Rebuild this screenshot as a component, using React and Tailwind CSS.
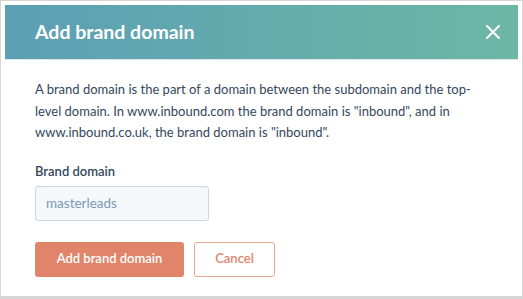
export default function App() {
  return (
    <div
      className="w-[523px] h-[299px] bg-white border border-[#d6d6d6] border-b-[3px] p-1 flex flex-col"
      style={{ fontFamily: "Lato, 'Open Sans', sans-serif" }}
    >
      <div className="h-[55px] shrink-0 flex items-center justify-between pl-[30px] pr-[18px] bg-gradient-to-r from-[#5c9fb4] to-[#6cb7a4] border-b border-[#d9e9ee]">
        <h1 className="text-[19.5px] font-bold text-white">Add brand domain</h1>
        <svg width="14" height="14" viewBox="0 0 14 14" className="text-white">
          <path d="M1 1 L13 13 M13 1 L1 13" stroke="currentColor" strokeWidth="2" strokeLinecap="square" />
        </svg>
      </div>
      <div className="pl-[30px] pr-[30px] pt-[19px] text-[#33475b]">
        <p className="text-[13px] leading-[21.5px] whitespace-nowrap">
          A brand domain is the part of a domain between the subdomain and the top-
          <br />
          level domain. In www.inbound.com the brand domain is "inbound", and in
          <br />
          www.inbound.co.uk, the brand domain is "inbound".
        </p>
        <div className="mt-[17px] text-[13px] font-semibold leading-[20px]">Brand domain</div>
        <div className="mt-[5px] w-[174px] h-[35px] rounded-[3px] border border-[#cbd6e2] bg-[#f5f8fa] flex items-center px-[10px] text-[13.5px] text-[#7c98b6]">
          masterleads
        </div>
        <div className="mt-[21px] flex gap-[10px]">
          <button className="w-[149px] h-[35px] rounded-[3px] bg-[#e0856a] text-white text-[13px] font-semibold">
            Add brand domain
          </button>
          <button className="w-[81px] h-[35px] rounded-[3px] bg-white border border-[#eea58e] text-[#e0856a] text-[13px] font-semibold">
            Cancel
          </button>
        </div>
      </div>
    </div>
  );
}
